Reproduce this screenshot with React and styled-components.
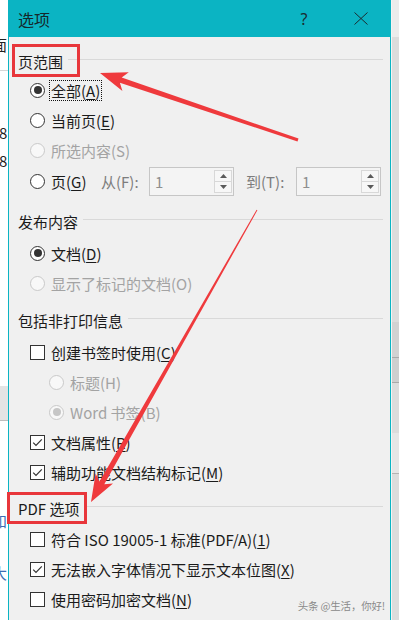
import React from "react";
import styled, { createGlobalStyle } from "styled-components";

const TEAL = "#0bb4c3";

const Global = createGlobalStyle`
  html, body { margin: 0; padding: 0; background: #fff; overflow: hidden; }
  body { font-family: "Noto Sans CJK SC", "Noto Sans", sans-serif; }
  #root { width: 399px; height: 620px; }
`;

const Page = styled.div`
  position: relative;
  width: 399px;
  height: 620px;
  display: flex;
  overflow: hidden;
`;

const LeftStrip = styled.div`
  width: 8px;
  flex: none;
  background: #fff;
  display: flex;
  flex-direction: column;
  overflow: hidden;
`;

const StripGap = styled.div`
  height: ${(p) => p.$h}px;
  flex: none;
  background: ${(p) => p.$bg || "transparent"};
  border-bottom: ${(p) => (p.$line ? `1px solid ${p.$line}` : "none")};
`;

const StripText = styled.div`
  height: ${(p) => p.$h}px;
  flex: none;
  font-size: 15px;
  line-height: ${(p) => p.$h}px;
  color: ${(p) => p.$color || "#222"};
  margin-left: ${(p) => p.$ml || 0}px;
  white-space: nowrap;
`;

const RightStrip = styled.div`
  width: 8px;
  flex: none;
  background: #dcdcdc;
  display: flex;
  flex-direction: column;
  border-left: 1px solid #f4f4f4;
  box-sizing: border-box;
`;

const Dialog = styled.div`
  width: 383px;
  flex: none;
  box-sizing: border-box;
  border-left: 1px solid ${TEAL};
  border-right: 1px solid ${TEAL};
  display: flex;
  flex-direction: column;
  background: #f0f0f0;
`;

const TitleBar = styled.div`
  height: 37px;
  flex: none;
  background: ${TEAL};
  display: flex;
  align-items: center;
  padding-left: 9px;
`;

const Title = styled.div`
  font-size: 16px;
  color: #15282b;
  flex: 1;
`;

const TitleButton = styled.div`
  width: ${(p) => p.$w}px;
  height: 37px;
  display: flex;
  align-items: center;
  justify-content: center;
  font-family: "Noto Sans", sans-serif;
  font-size: 16px;
  color: #1a2c30;
  margin-right: ${(p) => p.$mr || 0}px;
`;

const Body = styled.div`
  flex: 1;
  display: flex;
  flex-direction: column;
  padding: 10px 7px 0 9px;
`;

const Heading = styled.div`
  height: 28px;
  display: flex;
  align-items: center;
  font-size: 15px;
  color: #1b1b1b;
  margin-top: ${(p) => p.$mt || 0}px;
  margin-bottom: ${(p) => p.$mb || 0}px;
  white-space: nowrap;
  &::after {
    content: "";
    flex: 1;
    height: 1px;
    background: #d9d9d9;
    margin-left: 5px;
    transform: translateY(-2px);
  }
`;

const Row = styled.div`
  height: ${(p) => p.$h || 30}px;
  display: flex;
  align-items: center;
  padding-left: ${(p) => p.$indent || 12}px;
  font-size: 15px;
  white-space: nowrap;
`;

const RadioMark = styled.span`
  width: 15px;
  height: 15px;
  box-sizing: border-box;
  border-radius: 50%;
  flex: none;
  border: 1px solid ${(p) => (p.$disabled ? "#c9c9c9" : "#333")};
  background: ${(p) => (p.$disabled ? "#f8f8f8" : "#fff")};
  display: flex;
  align-items: center;
  justify-content: center;
  &::after {
    content: "";
    width: 8px;
    height: 8px;
    border-radius: 50%;
    background: ${(p) => (p.$disabled ? "#c6c6c6" : "#333")};
    display: ${(p) => (p.$checked ? "block" : "none")};
  }
`;

const CheckMark = styled.span`
  width: 15px;
  height: 15px;
  box-sizing: border-box;
  flex: none;
  border: 1px solid #333;
  background: #fff;
  display: flex;
  align-items: center;
  justify-content: center;
`;

const Label = styled.span`
  margin-left: 4px;
  padding: 0 1px;
  line-height: 19px;
  border: 1px ${(p) => (p.$focus ? "dotted #111" : "solid transparent")};
  color: ${(p) => (p.$disabled ? "#a3a3a3" : "#1b1b1b")};
  width: ${(p) => (p.$w ? `${p.$w}px` : "auto")};
  box-sizing: border-box;
  u { text-decoration: underline; text-underline-offset: 2px; }
`;

const FieldLabel = styled.span`
  width: ${(p) => p.$w}px;
  flex: none;
  color: #7d7d7d;
  font-size: 15px;
`;

const Spin = styled.div`
  width: 85px;
  height: 29px;
  box-sizing: border-box;
  flex: none;
  border: 1px solid #c6c6c6;
  background: #f4f4f4;
  display: flex;
  margin-right: ${(p) => p.$mr || 0}px;
`;

const SpinValue = styled.div`
  flex: 1;
  padding-left: 5px;
  display: flex;
  align-items: center;
  color: #8f8f8f;
  font-size: 15px;
`;

const SpinButtons = styled.div`
  width: 19px;
  display: flex;
  flex-direction: column;
  padding: 2px 1px 2px 0;
  box-sizing: border-box;
`;

const SpinButton = styled.div`
  flex: 1;
  display: flex;
  align-items: center;
  justify-content: center;
  border: 1px solid #d8d8d8;
  background: #f7f7f7;
  & + & { border-top: none; }
`;

const Watermark = styled.div`
  position: absolute;
  right: 14px;
  bottom: 7px;
  font-size: 10.5px;
  letter-spacing: -0.2px;
  color: #8a8a8a;
  white-space: nowrap;
`;

const Overlay = styled.svg`
  position: absolute;
  left: 0;
  top: 0;
  pointer-events: none;
`;

function Radio({ checked, disabled, focus, indent, children, w }) {
  return (
    <Row $indent={indent}>
      <RadioMark $checked={checked} $disabled={disabled} />
      <Label $disabled={disabled} $focus={focus} $w={w}>
        {children}
      </Label>
    </Row>
  );
}

function Check({ checked, children }) {
  return (
    <Row>
      <CheckMark>
        {checked && (
          <svg width="13" height="13" viewBox="0 0 13 13">
            <path d="M2.2 6.6 L5 9.4 L10.8 3.4" fill="none" stroke="#333" strokeWidth="1.2" />
          </svg>
        )}
      </CheckMark>
      <Label>{children}</Label>
    </Row>
  );
}

function Tri({ up }) {
  return (
    <svg width="7" height="4" viewBox="0 0 7 4">
      <path d={up ? "M0 4 L3.5 0 L7 4 Z" : "M0 0 L3.5 4 L7 0 Z"} fill="#5a5a5a" />
    </svg>
  );
}

function SpinBox({ mr }) {
  return (
    <Spin $mr={mr}>
      <SpinValue>1</SpinValue>
      <SpinButtons>
        <SpinButton>
          <Tri up />
        </SpinButton>
        <SpinButton>
          <Tri />
        </SpinButton>
      </SpinButtons>
    </Spin>
  );
}

export default function App() {
  return (
    <>
      <Global />
      <Page>
        <LeftStrip>
          <StripGap $h={33} />
          <StripText $h={24} $ml={-8}>面</StripText>
          <StripGap $h={13} $line="#d6d6d6" />
          <StripGap $h={50} />
          <StripText $h={24} $ml={-1}>8</StripText>
          <StripGap $h={4} />
          <StripText $h={24} $ml={-1}>8</StripText>
          <StripGap $h={213} />
          <StripGap $h={34} $bg="#e4e4e4" $line="#bdbdbd" />
          <StripGap $h={88} />
          <StripText $h={24} $ml={-8} $color="#3a6db4">和</StripText>
          <StripGap $h={28} />
          <StripText $h={24} $ml={-8} $color="#3a6db4">大</StripText>
        </LeftStrip>

        <Dialog>
          <TitleBar>
            <Title>选项</Title>
            <TitleButton $w={28} $mr={28}>?</TitleButton>
            <TitleButton $w={30} $mr={14}>
              <svg width="14" height="13" viewBox="0 0 14 13">
                <path d="M0.5 0.5 L13.5 12.5 M13.5 0.5 L0.5 12.5" stroke="#1a2c30" strokeWidth="1" fill="none" />
              </svg>
            </TitleButton>
          </TitleBar>
          <Body>
            <Heading>页范围</Heading>
            <Radio checked focus>
              全部(<u>A</u>)
            </Radio>
            <Radio>
              当前页(<u>E</u>)
            </Radio>
            <Radio disabled>所选内容(S)</Radio>
            <Row $h={32}>
              <RadioMark />
              <Label $w={52}>
                页(<u>G</u>)
              </Label>
              <FieldLabel $w={48}>从(F):</FieldLabel>
              <SpinBox mr={12} />
              <FieldLabel $w={50}>到(T):</FieldLabel>
              <SpinBox />
            </Row>

            <Heading $mt={10} $mb={3}>发布内容</Heading>
            <Radio checked>
              文档(<u>D</u>)
            </Radio>
            <Radio disabled>显示了标记的文档(O)</Radio>

            <Heading $mt={8} $mb={3}>包括非打印信息</Heading>
            <Check>
              创建书签时使用(<u>C</u>)
            </Check>
            <Radio disabled indent={31}>
              标题(H)
            </Radio>
            <Radio disabled checked indent={31}>
              Word 书签(B)
            </Radio>
            <Check checked>
              文档属性(<u>R</u>)
            </Check>
            <Check checked>
              辅助功能文档结构标记(<u>M</u>)
            </Check>

            <Heading $mt={7} $mb={2}>PDF 选项</Heading>
            <Check>
              符合 ISO 19005-1 标准(PDF/A)(<u>1</u>)
            </Check>
            <Check checked>
              无法嵌入字体情况下显示文本位图(<u>X</u>)
            </Check>
            <Check>
              使用密码加密文档(<u>N</u>)
            </Check>
          </Body>
        </Dialog>

        <RightStrip>
          <StripGap $h={37} $bg="#ececec" />
          <StripGap $h={285} />
          <StripGap $h={35} $bg="#d2d2d2" $line="#a9a9a9" />
          <StripGap $h={24} $bg="#cfcfcf" $line="#a9a9a9" />
          <StripGap $h={50} />
          <StripGap $h={40} $bg="#e6e6e6" $line="#b3b3b3" />
        </RightStrip>

        <Overlay width="399" height="620" viewBox="0 0 399 620">
          <rect x="13.5" y="45.5" width="65" height="30" fill="none" stroke="#e8363b" strokeWidth="3" />
          <rect x="8.5" y="493.5" width="77" height="29" fill="none" stroke="#e8363b" strokeWidth="3" />
          <polygon
            points="100,73 122.4,91.1 119.9,82.7 297.5,141.4 298.5,138.6 121.7,77.5 128.8,72.2"
            fill="#ef3a3d"
          />
          <polygon
            points="91,502 113,483.5 104.3,484.3 257.4,210.2 256.6,209.8 99.5,481.5 95.6,473.6"
            fill="#ef3a3d"
          />
        </Overlay>
        <Watermark>头条 @生活，你好!</Watermark>
      </Page>
    </>
  );
}
